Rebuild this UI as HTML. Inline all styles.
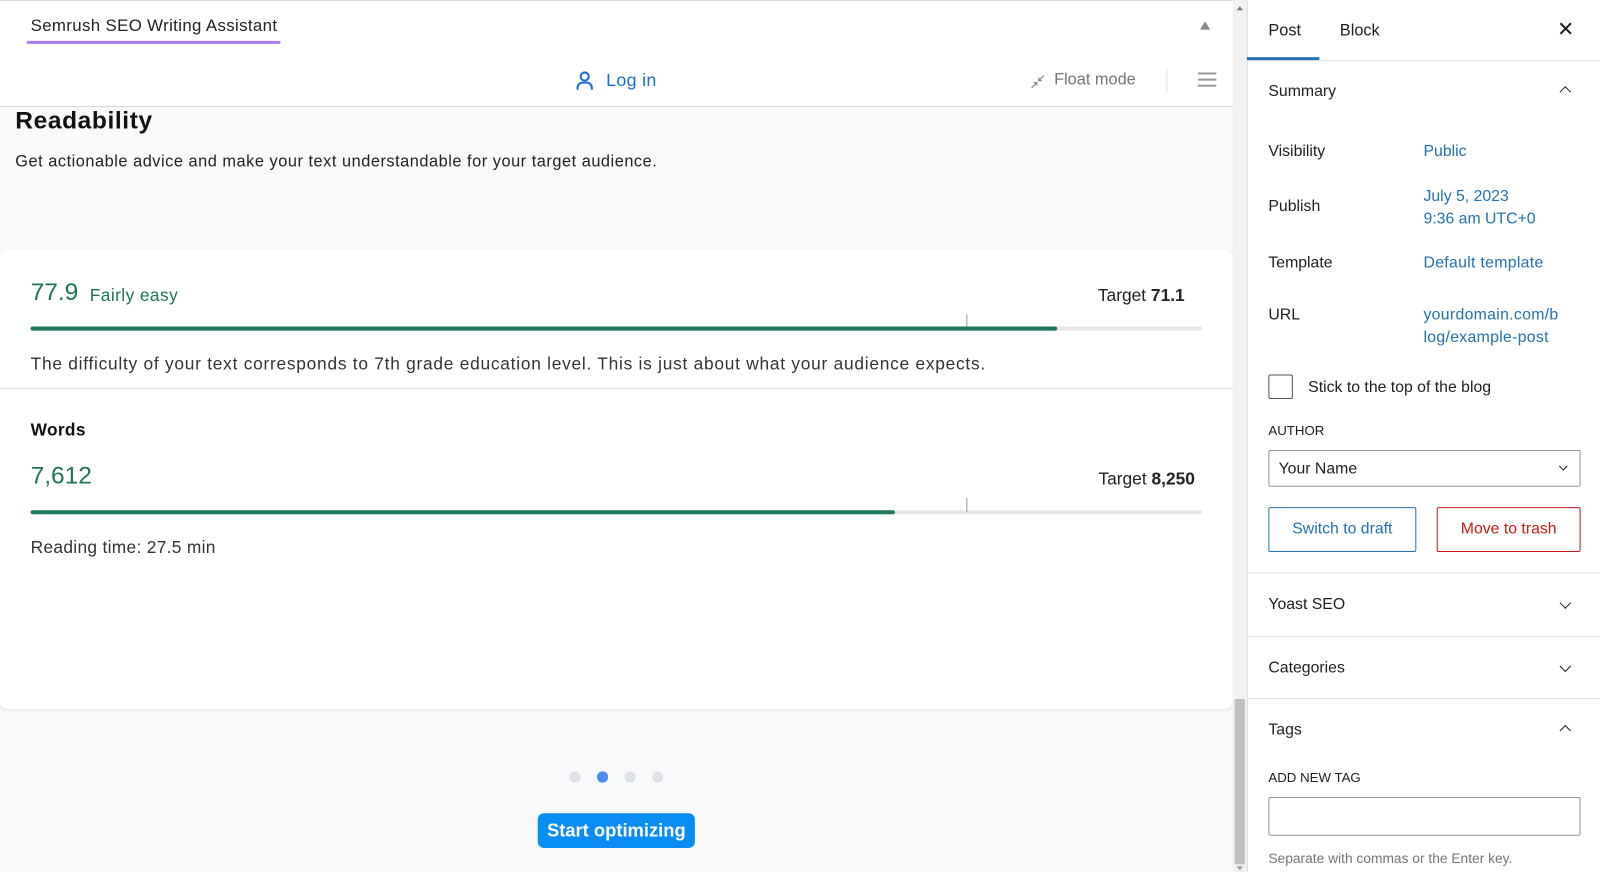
<!DOCTYPE html>
<html><head><meta charset="utf-8"><style>
*{box-sizing:border-box;margin:0;padding:0}
html,body{width:1600px;height:872px;overflow:hidden;background:#fff;font-family:"Liberation Sans",Arial,sans-serif}
#w{position:absolute;left:0;top:0;width:1568px;height:855px;transform:scale(1.02041);transform-origin:0 0;}
.a{position:absolute;white-space:nowrap}
.c{transform:translateY(-50%)}
.sb{color:#1e1e1e;font-size:15.5px}
.lk{color:#2271b1;font-size:15.5px}
.chev{position:absolute;width:8px;height:8px;border-left:1.6px solid #1e1e1e;border-top:1.6px solid #1e1e1e}
.up{transform:rotate(45deg)}
.dn{transform:rotate(225deg)}
.hr{position:absolute;left:1222px;width:346px;height:1px;background:#e0e0e0}
</style></head><body><div id="w">
<div class="a" style="left:0;top:0;width:1208px;height:1px;background:#ddd"></div>
<div class="a c" style="left:30px;top:26px;font-size:16.5px;color:#222;letter-spacing:0.35px">Semrush SEO Writing Assistant</div>
<div class="a" style="left:26px;top:40px;width:249px;height:3px;background:#a97ee9;border-radius:2px"></div>
<div class="a" style="left:1176px;top:21px;width:0;height:0;border-left:5px solid transparent;border-right:5px solid transparent;border-bottom:8px solid #888"></div>
<svg class="a" style="left:563px;top:69px" width="20" height="20" viewBox="0 0 20 20"><circle cx="10" cy="6" r="4" fill="none" stroke="#1a6cd0" stroke-width="2"/><path d="M3 19v-2a5 5 0 0 1 5-5h4a5 5 0 0 1 5 5v2" fill="none" stroke="#1a6cd0" stroke-width="2"/></svg>
<div class="a c" style="left:594px;top:79px;font-size:17.5px;color:#1a6cd0;letter-spacing:0.3px">Log in</div>
<svg class="a" style="left:1009px;top:72px" width="16" height="16" viewBox="0 0 16 16" stroke="#888" stroke-width="1.2" fill="none"><path d="M2 14l5-5M4 9h3v3M14 2l-5 5M9 4v3h3"/></svg>
<div class="a c" style="left:1033px;top:79px;font-size:16px;color:#777">Float mode</div>
<div class="a" style="left:1143px;top:68px;width:1px;height:22px;background:#ddd"></div>
<div class="a" style="left:1174px;top:71px;width:18px;height:2px;background:#999;box-shadow:0 6px 0 #999,0 12px 0 #999"></div>
<div class="a" style="left:0;top:104px;width:1208px;height:1px;background:#d4d4d4"></div>
<div class="a" style="left:0;top:105px;width:1208px;height:750px;background:#f8f9fa"></div>
<div class="a c" style="left:15px;top:119px;font-size:24px;font-weight:bold;color:#111;letter-spacing:0.6px">Readability</div>
<div class="a c" style="left:15px;top:159px;font-size:16px;color:#222;letter-spacing:0.52px">Get actionable advice and make your text understandable for your target audience.</div>
<div class="a" style="left:0;top:245px;width:1208px;height:450px;background:#fff;border-radius:8px;box-shadow:0 1px 3px rgba(0,0,0,.08)"></div>
<div class="a c" style="left:30px;top:287px;font-size:24px;color:#1d7558">77.9</div>
<div class="a c" style="left:88px;top:290px;font-size:17px;color:#1d7558;letter-spacing:0.4px">Fairly easy</div>
<div class="a c" style="right:407px;top:290px;font-size:17px;color:#222">Target <b>71.1</b></div>
<div class="a" style="left:30px;top:320px;width:1148px;height:4px;background:#e6e6e6;border-radius:2px"></div>
<div class="a" style="left:30px;top:320px;width:1006px;height:4px;background:#1b7a5e;border-radius:2px"></div>
<div class="a" style="left:947px;top:308px;width:1px;height:12px;background:#999"></div>
<div class="a c" style="left:30px;top:357px;font-size:17px;color:#333;letter-spacing:0.72px">The difficulty of your text corresponds to 7th grade education level. This is just about what your audience expects.</div>
<div class="a" style="left:0;top:380px;width:1208px;height:1px;background:#ddd"></div>
<div class="a c" style="left:30px;top:422px;font-size:17px;font-weight:bold;color:#111;letter-spacing:0.3px">Words</div>
<div class="a c" style="left:30px;top:467px;font-size:24px;color:#1d7558">7,612</div>
<div class="a c" style="right:397px;top:470px;font-size:17px;color:#222">Target <b>8,250</b></div>
<div class="a" style="left:30px;top:500px;width:1148px;height:4px;background:#e6e6e6;border-radius:2px"></div>
<div class="a" style="left:30px;top:500px;width:847px;height:4px;background:#1b7a5e;border-radius:2px"></div>
<div class="a" style="left:947px;top:488px;width:1px;height:14px;background:#999"></div>
<div class="a c" style="left:30px;top:537px;font-size:17px;color:#333;letter-spacing:0.3px">Reading time: 27.5 min</div>
<div class="a" style="left:558px;top:756px;width:11px;height:11px;border-radius:50%;background:#dde1e5"></div>
<div class="a" style="left:585px;top:756px;width:11px;height:11px;border-radius:50%;background:#4a8cf0"></div>
<div class="a" style="left:612px;top:756px;width:11px;height:11px;border-radius:50%;background:#dde1e5"></div>
<div class="a" style="left:639px;top:756px;width:11px;height:11px;border-radius:50%;background:#dde1e5"></div>
<div class="a" style="left:527px;top:797px;width:154px;height:34px;background:#0a8df2;border-radius:6px;color:#fff;font-size:18px;font-weight:bold;text-align:center;line-height:34px">Start optimizing</div>
<div class="a" style="left:1208px;top:0;width:14px;height:855px;background:#f1f1f1"></div>
<div class="a" style="left:1210px;top:685px;width:10px;height:162px;background:#c1c1c1"></div>
<div class="a" style="left:1212px;top:6px;border-left:3px solid transparent;border-right:3px solid transparent;border-bottom:4px solid #777"></div>
<div class="a" style="left:1212px;top:849px;border-left:3px solid transparent;border-right:3px solid transparent;border-top:4px solid #999"></div>
<div class="a" style="left:1222px;top:0;width:1px;height:855px;background:#e0e0e0"></div>
<div class="a c sb" style="left:1243px;top:31px;font-size:16px">Post</div>
<div class="a c sb" style="left:1313px;top:31px;font-size:16px">Block</div>
<div class="a" style="left:1222px;top:56px;width:71px;height:3px;background:#2271b1"></div>
<div class="a c" style="left:1526px;top:29px;font-size:20px;color:#1e1e1e">✕</div>
<div class="hr" style="top:59px"></div>
<div class="a c sb" style="left:1243px;top:90px;font-weight:500">Summary</div>
<div class="chev up" style="left:1530px;top:86px"></div>
<div class="a c sb" style="left:1243px;top:149px">Visibility</div>
<div class="a c lk" style="left:1395px;top:149px">Public</div>
<div class="a c sb" style="left:1243px;top:203px">Publish</div>
<div class="a c lk" style="left:1395px;top:193px">July 5, 2023</div>
<div class="a c lk" style="left:1395px;top:215px">9:36 am UTC+0</div>
<div class="a c sb" style="left:1243px;top:258px">Template</div>
<div class="a c lk" style="left:1395px;top:258px;letter-spacing:0.3px">Default template</div>
<div class="a c sb" style="left:1243px;top:309px">URL</div>
<div class="a c lk" style="left:1395px;top:309px;letter-spacing:0.3px">yourdomain.com/b</div>
<div class="a c lk" style="left:1395px;top:331px;letter-spacing:0.3px">log/example-post</div>
<div class="a" style="left:1243px;top:367px;width:24px;height:24px;border:1px solid #555;border-radius:2px"></div>
<div class="a c sb" style="left:1282px;top:380px">Stick to the top of the blog</div>
<div class="a c" style="left:1243px;top:422px;font-size:13px;font-weight:500;color:#1e1e1e">AUTHOR</div>
<div class="a" style="left:1243px;top:441px;width:306px;height:36px;border:1px solid #949494;border-radius:2px"></div>
<div class="a c sb" style="left:1253px;top:460px">Your Name</div>
<div class="a" style="left:1529px;top:454px;width:6px;height:6px;border-right:1.5px solid #1e1e1e;border-bottom:1.5px solid #1e1e1e;transform:rotate(45deg)"></div>
<div class="a" style="left:1243px;top:497px;width:145px;height:44px;border:1px solid #2271b1;border-radius:2px;color:#2271b1;font-size:15.5px;text-align:center;line-height:42px">Switch to draft</div>
<div class="a" style="left:1408px;top:497px;width:141px;height:44px;border:1px solid #cc1818;border-radius:2px;color:#cc1818;font-size:15.5px;text-align:center;line-height:42px">Move to trash</div>
<div class="hr" style="top:561px"></div>
<div class="a c sb" style="left:1243px;top:593px;font-weight:500">Yoast SEO</div>
<div class="chev dn" style="left:1530px;top:587px"></div>
<div class="hr" style="top:623px"></div>
<div class="a c sb" style="left:1243px;top:655px;font-weight:500">Categories</div>
<div class="chev dn" style="left:1530px;top:649px"></div>
<div class="hr" style="top:684px"></div>
<div class="a c sb" style="left:1243px;top:716px;font-weight:500">Tags</div>
<div class="chev up" style="left:1530px;top:712px"></div>
<div class="a c" style="left:1243px;top:762px;font-size:13px;font-weight:500;color:#1e1e1e">ADD NEW TAG</div>
<div class="a" style="left:1243px;top:781px;width:306px;height:38px;border:1px solid #949494;border-radius:2px"></div>
<div class="a c" style="left:1243px;top:841px;font-size:13.5px;color:#757575">Separate with commas or the Enter key.</div>
</div></body></html>
